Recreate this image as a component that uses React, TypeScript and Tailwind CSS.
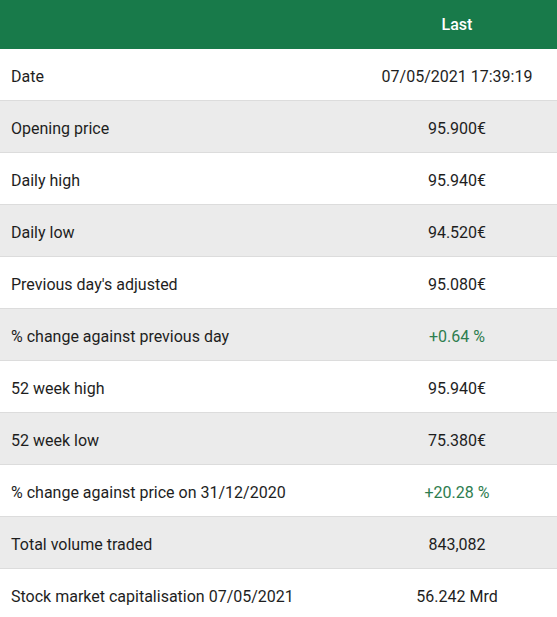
const rows: { label: string; value: string; up?: boolean }[] = [
  { label: "Date", value: "07/05/2021 17:39:19" },
  { label: "Opening price", value: "95.900€" },
  { label: "Daily high", value: "95.940€" },
  { label: "Daily low", value: "94.520€" },
  { label: "Previous day's adjusted", value: "95.080€" },
  { label: "% change against previous day", value: "+0.64 %", up: true },
  { label: "52 week high", value: "95.940€" },
  { label: "52 week low", value: "75.380€" },
  { label: "% change against price on 31/12/2020", value: "+20.28 %", up: true },
  { label: "Total volume traded", value: "843,082" },
  { label: "Stock market capitalisation 07/05/2021", value: "56.242 Mrd" },
];

export default function App() {
  return (
    <div className="w-[557px] bg-white text-[16px] text-[#1e1e1e] font-['Roboto',sans-serif]">
      <div className="flex h-[49px] items-center bg-[#187a4a] text-white">
        <div className="flex-1" />
        <div className="w-[200px] text-center font-medium">Last</div>
      </div>
      {rows.map((row, i) => (
        <div
          key={row.label}
          className={`flex h-[52px] items-center border-b border-[#dcdcdc] pt-1 ${
            i % 2 === 1 ? "bg-[#ebebeb]" : "bg-white"
          }`}
        >
          <div className="flex-1 pl-[11px]">{row.label}</div>
          <div className={`w-[200px] text-center ${row.up ? "text-[#2e7d4f]" : ""}`}>
            {row.value}
          </div>
        </div>
      ))}
    </div>
  );
}
